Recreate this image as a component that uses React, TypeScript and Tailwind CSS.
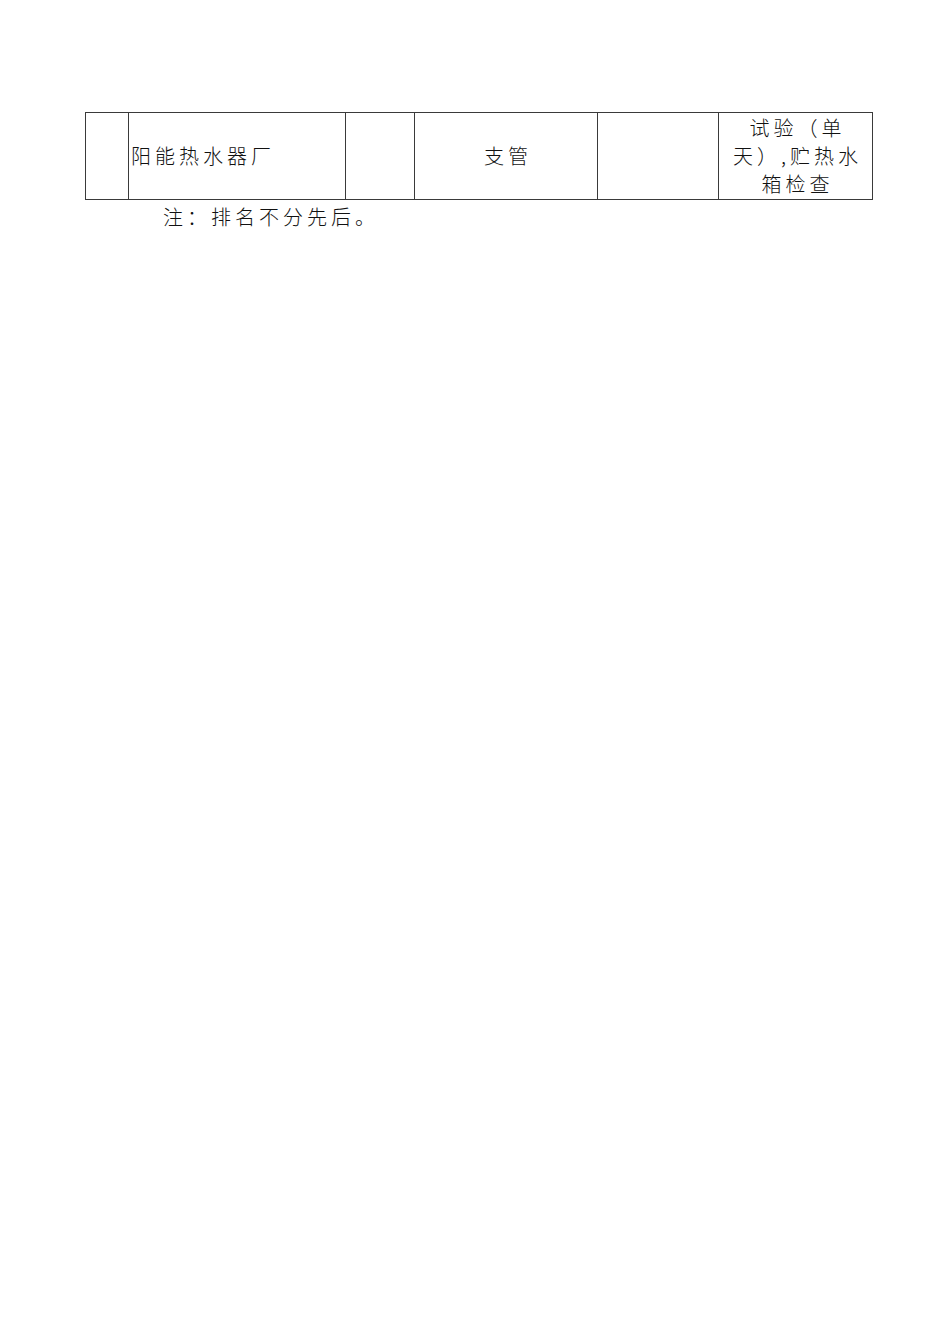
const font = { fontFamily: '"Noto Sans CJK SC", "Noto Sans", sans-serif' };

const cell = "border border-[#3a3a3a] p-0 align-middle";

export default function App() {
  return (
    <div
      className="w-[950px] h-[1344px] bg-white text-[#111] text-[20px] tracking-[4px] leading-[28px] font-light"
      style={font}
    >
      <div className="pt-[112px] pl-[85px]">
        <table className="border-collapse table-fixed w-[787px]">
          <colgroup>
            <col className="w-[43px]" />
            <col className="w-[217px]" />
            <col className="w-[69px]" />
            <col className="w-[183px]" />
            <col className="w-[121px]" />
            <col className="w-[154px]" />
          </colgroup>
          <tbody>
            <tr className="h-[87px]">
              <td className={cell}></td>
              <td className={`${cell} pl-[2px] text-left`}>阳能热水器厂</td>
              <td className={cell}></td>
              <td className={`${cell} text-center pl-[4px]`}>支管</td>
              <td className={cell}></td>
              <td className={`${cell} text-center pl-[4px]`}>
                <div>试验（单</div>
                <div>天）,贮热水</div>
                <div>箱检查</div>
              </td>
            </tr>
          </tbody>
        </table>
        <p className="pl-[78px] pt-[3px]">注：排名不分先后。</p>
      </div>
    </div>
  );
}
